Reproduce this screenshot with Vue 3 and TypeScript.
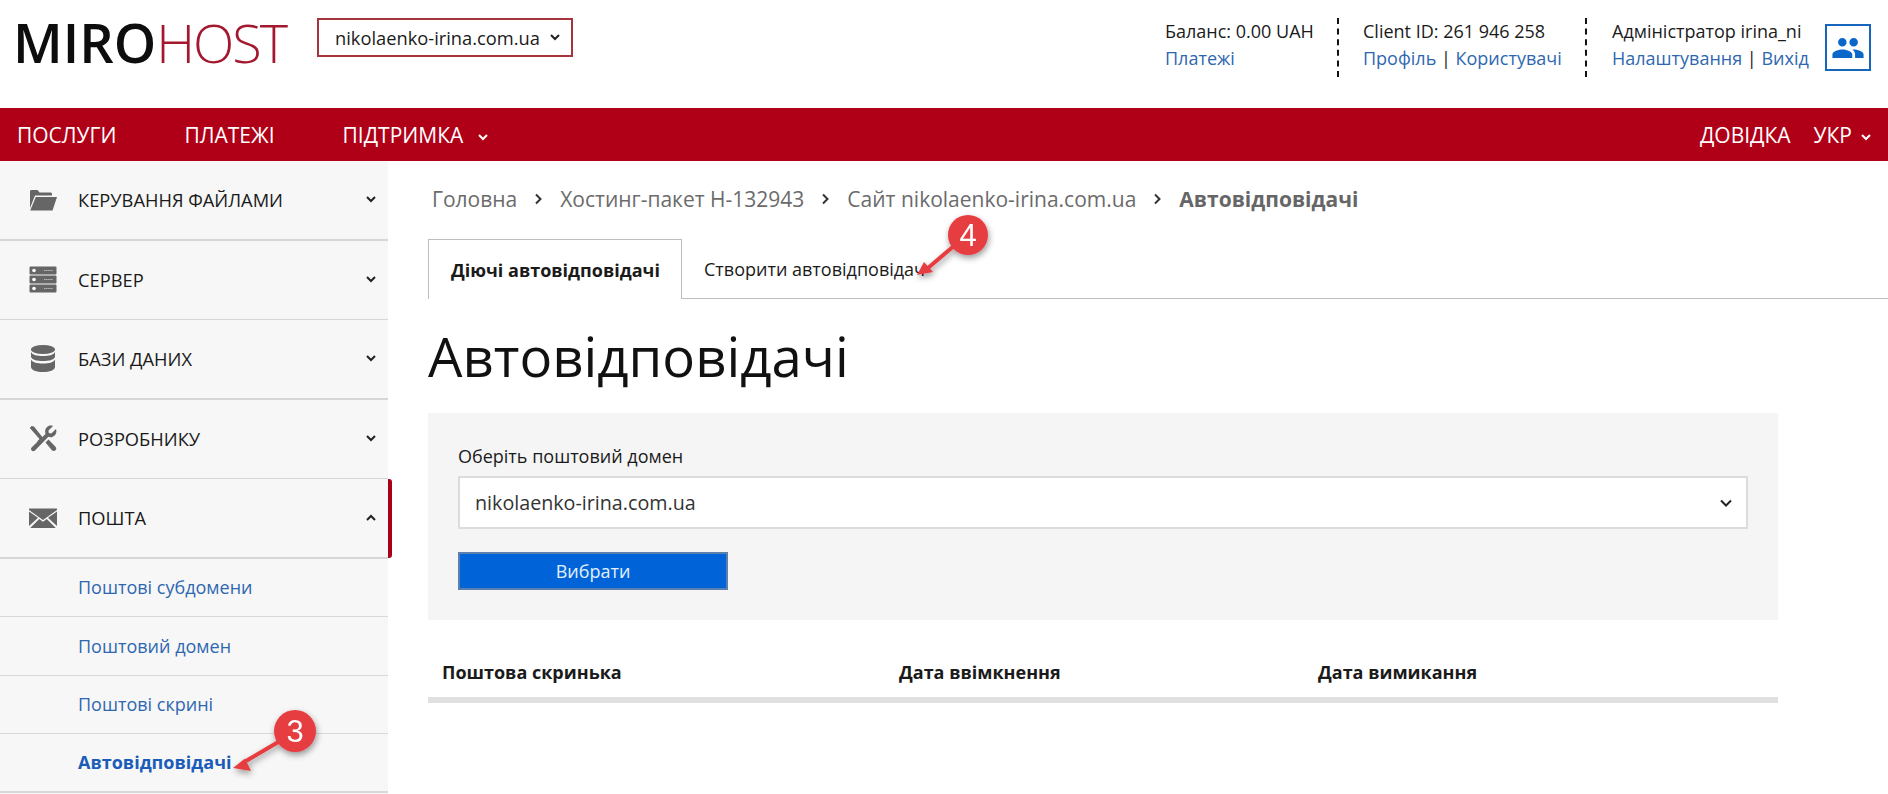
<script setup lang="ts">
interface MenuItem {
  label: string;
  icon: string;
  thick?: boolean;
}

const menu: MenuItem[] = [
  { label: 'Керування файлами', icon: 'folder', thick: true },
  { label: 'Сервер', icon: 'server' },
  { label: 'Бази даних', icon: 'db', thick: true },
  { label: 'Розробнику', icon: 'tools' },
];

const subItems = ['Поштові субдомени', 'Поштовий домен', 'Поштові скрині'];
const crumbs = ['Головна', 'Хостинг-пакет Н-132943', 'Сайт nikolaenko-irina.com.ua'];
</script>

<template>
  <div class="page">
    <header class="top">
      <div class="logo"><span class="logo-a">MIRO</span><span class="logo-b">HOST</span></div>
      <div class="domain">
        <span>nikolaenko-irina.com.ua</span>
        <svg class="chev" width="10" height="7" viewBox="0 0 10 7"><path d="M1 1l4 4 4-4" /></svg>
      </div>
      <div class="account">
        <div class="acc-col acc-balance">
          <div>Баланс: 0.00 UAH</div>
          <div><a>Платежі</a></div>
        </div>
        <div class="acc-col acc-client">
          <div>Client ID: 261 946 258</div>
          <div><a>Профіль</a> | <a>Користувачі</a></div>
        </div>
        <div class="acc-col acc-admin">
          <div>Адміністратор irina_ni</div>
          <div><a>Налаштування</a> | <a>Вихід</a></div>
        </div>
        <div class="user-box">
          <svg width="34" height="34" viewBox="0 0 24 24"><path d="M16 11c1.66 0 2.99-1.34 2.99-3S17.66 5 16 5c-1.66 0-3 1.34-3 3s1.34 3 3 3zm-8 0c1.66 0 2.99-1.34 2.99-3S9.66 5 8 5C6.34 5 5 6.34 5 8s1.34 3 3 3zm0 2c-2.33 0-7 1.17-7 3.5V19h14v-2.5c0-2.33-4.67-3.5-7-3.5zm8 0c-.29 0-.62.02-.97.05 1.16.84 1.97 1.97 1.97 3.45V19h6v-2.5c0-2.33-4.67-3.5-7-3.5z" /></svg>
        </div>
      </div>
    </header>

    <nav class="bar">
      <a class="bar-a">Послуги</a>
      <a class="bar-b">Платежі</a>
      <a class="bar-c">Підтримка<svg class="chev chev-w" width="10" height="7" viewBox="0 0 10 7"><path d="M1 1l4 4 4-4" /></svg></a>
      <a class="bar-d">Довідка</a>
      <a class="bar-e">Укр<svg class="chev chev-w" width="10" height="7" viewBox="0 0 10 7"><path d="M1 1l4 4 4-4" /></svg></a>
    </nav>

    <div class="body">
      <aside class="side">
        <div v-for="item in menu" :key="item.label" class="row" :class="{ thick: item.thick }">
          <span class="row-icon">
            <svg v-if="item.icon === 'folder'" width="28" height="24" viewBox="0 0 28 24">
              <path d="M1 3.500C1 2.500 1.700 2 2.500 2h6l2 2.500h11c.8 0 1.500.5 1.500 1.500v1.500H6L1 20z" />
              <path d="M6.800 9H28l-4.500 13.500H1.200z" />
            </svg>
            <svg v-else-if="item.icon === 'server'" width="28" height="27" viewBox="0 0 28 27">
              <rect x="0.500" y="0.500" width="27" height="8" rx="1" />
              <rect x="0.500" y="9.500" width="27" height="8" rx="1" />
              <rect x="0.500" y="18.500" width="27" height="8" rx="1" />
              <circle cx="5" cy="4.500" r="1.800" fill="#fff" />
              <circle cx="5" cy="13.500" r="1.800" fill="#fff" />
              <circle cx="5" cy="22.500" r="1.800" fill="#fff" />
              <path d="M15 4.500h9M15 13.500h9M15 22.500h9" stroke="#bbb" stroke-width="1" stroke-dasharray="1.500 .6" fill="none" />
            </svg>
            <svg v-else-if="item.icon === 'db'" width="24" height="27" viewBox="0 0 24 27">
              <ellipse cx="12" cy="4.500" rx="12" ry="4.500" />
              <path d="M0 7c1.500 3 6 4 12 4s10.500-1 12-4v5c-1.500 3-6 4-12 4S1.500 15 0 12z" />
              <path d="M0 14.500c1.500 3 6 4 12 4s10.500-1 12-4V22c0 3-5.500 5-12 5S0 25 0 22z" />
            </svg>
            <svg v-else width="28" height="27" viewBox="0 0 28 27">
              <path d="M2.500 1L.8 3l9.700 11-2.200 2.200L10.500 18.500l2.400-2.200 1.800-2.600L5 1.500z" />
              <path d="M24 1l-4.500 4.500.3 2.500 2.500.5L27 4c1.200 3.300-.3 7-3.800 8-1.500.4-2.800.2-3.800-.2L6.200 25.300c-1 1.200-2.500 1.300-3.500.3S1.700 23.100 3 22l13.500-13c-1-3.700 0-6.700 3-8 1.500-.6 3-.6 4.500 0z" />
              <path d="M16.500 17.500l3-3 7 7.200c1 1.100 1 2.600 0 3.600s-2.500 1-3.600 0z" />
            </svg>
          </span>
          <span class="row-label">{{ item.label }}</span>
          <svg class="chev" width="10" height="7" viewBox="0 0 10 7"><path d="M1 1l4 4 4-4" /></svg>
        </div>

        <div class="row row-open">
          <span class="row-icon">
            <svg width="28" height="20" viewBox="0 0 28 20">
              <path d="M0 1.500l14 10 14-10V0H0z" transform="translate(0 .4)" />
              <path d="M0 3.500V18l9-8.200z M28 3.500V18l-9-8.200z" />
              <path d="M1.200 20l9-9 3.800 2.700 3.800-2.700 9 9z" />
            </svg>
          </span>
          <span class="row-label">Пошта</span>
          <svg class="chev" width="10" height="7" viewBox="0 0 10 7"><path d="M1 6l4-4 4 4" /></svg>
        </div>
        <a v-for="s in subItems" :key="s" class="sub">{{ s }}</a>
        <a class="sub sub-active">Автовідповідачі</a>
      </aside>

      <main class="content">
        <div class="crumbs">
          <template v-for="c in crumbs" :key="c">
            <span>{{ c }}</span>
            <svg class="crumb-sep" width="9" height="12" viewBox="0 0 9 12"><path d="M2 1.500L6.500 6 2 10.500" /></svg>
          </template>
          <b>Автовідповідачі</b>
        </div>

        <div class="tabs">
          <div class="tab tab-active">Діючі автовідповідачі</div>
          <div class="tab">Створити автовідповідач</div>
        </div>

        <h1>Автовідповідачі</h1>

        <section class="panel">
          <div class="panel-label">Оберіть поштовий домен</div>
          <div class="select">
            <span>nikolaenko-irina.com.ua</span>
            <svg class="chev" width="12" height="8" viewBox="0 0 12 8"><path d="M1 1.500l5 5 5-5" /></svg>
          </div>
          <div class="btn">Вибрати</div>
        </section>

        <div class="thead">
          <span class="c1">Поштова скринька</span>
          <span class="c2">Дата ввімкнення</span>
          <span class="c3">Дата вимикання</span>
        </div>
      </main>
    </div>

    <!-- numbered callouts drawn over the screenshot -->
    <svg class="callouts" width="1888" height="794" viewBox="0 0 1888 794">
      <defs>
        <filter id="sh" x="-30%" y="-30%" width="160%" height="160%">
          <feDropShadow dx="1" dy="3" stdDeviation="3" flood-color="#000" flood-opacity=".4" />
        </filter>
      </defs>
      <g filter="url(#sh)">
        <path d="M280 741L246 761" stroke="#e53c41" stroke-width="4" fill="none" />
        <path d="M233 768l12-9.500 6 12.500z" fill="#e53c41" />
        <circle cx="295" cy="731" r="21" fill="#e53c41" />
        <text x="295" y="742" class="num">3</text>
      </g>
      <g filter="url(#sh)">
        <path d="M955 245L928 268" stroke="#e53c41" stroke-width="4" fill="none" />
        <path d="M917 275l7-13 9 10z" fill="#e53c41" />
        <circle cx="968" cy="235" r="20" fill="#e53c41" />
        <text x="968" y="246" class="num">4</text>
      </g>
    </svg>
  </div>
</template>

<style>
html,
body {
  margin: 0;
  background: #fff;
}
</style>

<style scoped>
.page {
  position: relative;
  width: 1888px;
  height: 794px;
  overflow: hidden;
  background: #fff;
  color: #1a1a1a;
  font-family: 'Open Sans', 'Noto Sans', sans-serif;
  font-size: 18px;
}

a {
  color: #2e67b0;
  text-decoration: none;
}

.chev path,
.crumb-sep path {
  fill: none;
  stroke: #222;
  stroke-width: 2;
}

/* header */
.top {
  display: flex;
  align-items: flex-start;
  height: 108px;
  padding-left: 13px;
  box-sizing: border-box;
}

.logo {
  flex-shrink: 0;
  width: 276px;
  margin-top: 15px;
  font-size: 54px;
  line-height: 54px;
  white-space: nowrap;
}

.logo-a {
  font-weight: 600;
  color: #0d0d0d;
  letter-spacing: 0;
}

.logo-b {
  font-weight: 300;
  color: #a3182f;
  letter-spacing: -2px;
}

.domain {
  display: flex;
  align-items: center;
  gap: 10px;
  margin-left: 28px;
  margin-top: 18px;
  width: 256px;
  height: 39px;
  box-sizing: border-box;
  padding-left: 16px;
  border: 2px solid #a5353d;
  font-size: 18.300px;
  white-space: nowrap;
}

.account {
  display: flex;
  align-items: flex-start;
  margin-left: auto;
  margin-top: 18px;
  padding-right: 17px;
}

.acc-col {
  height: 59px;
  box-sizing: border-box;
  line-height: 27px;
  white-space: nowrap;
}

.acc-balance {
  width: 172px;
}

.acc-client {
  width: 248px;
  padding-left: 24px;
  border-left: 2px dashed #111;
}

.acc-admin {
  width: 240px;
  padding-left: 25px;
  border-left: 2px dashed #111;
}

.user-box {
  display: flex;
  align-items: center;
  justify-content: center;
  width: 46px;
  height: 47px;
  margin-top: 6px;
  box-sizing: border-box;
  border: 2px solid #1766bd;
}

.user-box path {
  fill: #0a66c8;
}

/* red menu */
.bar {
  display: flex;
  align-items: center;
  height: 53px;
  background: #b00018;
  font-size: 21px;
  text-transform: uppercase;
}

.bar a {
  color: #fff;
  white-space: nowrap;
}

.bar-a {
  margin-left: 17px;
}

.bar-b {
  margin-left: 68px;
}

.bar-c {
  margin-left: 68px;
}

.bar-d {
  margin-left: auto;
}

.bar-e {
  margin-left: 23px;
  margin-right: 17px;
}

.chev-w {
  margin-left: 15px;
  vertical-align: 2px;
}

.bar-e .chev-w {
  margin-left: 9px;
}

.chev-w path {
  stroke: #fff;
}

/* body */
.body {
  display: grid;
  grid-template-columns: 388px 1fr;
}

.side {
  background: #f7f7f7;
  height: 633px;
}

.row {
  display: flex;
  align-items: center;
  height: 79.500px;
  padding-left: 29px;
  padding-right: 12px;
  box-sizing: border-box;
  border-bottom: 1px solid #d6d6d6;
  font-size: 18.300px;
  text-transform: uppercase;
}

.row.thick {
  border-bottom: 2px solid #d6d6d6;
}

.row-icon {
  display: flex;
  justify-content: center;
  align-items: center;
  width: 28px;
  margin-right: 21px;
}

.row-icon svg {
  fill: #666;
}

.row-label {
  flex: 1;
}

.row-open {
  position: relative;
  border-bottom-width: 2px;
}

.row-open::after {
  content: '';
  position: absolute;
  top: 0;
  right: -4px;
  bottom: -1px;
  width: 4px;
  background: #a80018;
  border-radius: 0 3px 3px 0;
}

.sub {
  display: flex;
  align-items: center;
  height: 58.500px;
  box-sizing: border-box;
  padding-left: 78px;
  border-bottom: 1px solid #d9d9d9;
  color: #2e67b0;
}

.sub-active {
  font-weight: 700;
  color: #1a5cb8;
  border-bottom-width: 2px;
}

/* content */
.content {
  padding-left: 40px;
}

.crumbs {
  display: flex;
  align-items: center;
  gap: 17px;
  height: 78px;
  padding-left: 4px;
  padding-bottom: 2px;
  box-sizing: border-box;
  font-size: 21px;
  color: #6b6b6b;
}

.crumbs b {
  font-weight: 700;
  color: #666;
}

.crumb-sep path {
  stroke: #333;
}

.tabs {
  display: flex;
  width: 1460px;
  height: 60px;
  box-sizing: border-box;
  border-bottom: 1px solid #bdbdbd;
}

.tab {
  display: flex;
  align-items: center;
  padding: 0 22px;
  height: 59px;
  box-sizing: border-box;
  white-space: nowrap;
}

.tab-active {
  width: 254px;
  height: 60px;
  font-weight: 700;
  background: #fff;
  border: 1px solid #bdbdbd;
  border-bottom: 0;
}

h1 {
  margin: 0;
  height: 114px;
  display: flex;
  align-items: center;
  font-size: 54.500px;
  font-weight: 400;
  color: #111;
}

.panel {
  width: 1350px;
  height: 207px;
  box-sizing: border-box;
  padding: 30px 30px 0;
  background: #f5f5f5;
}

.panel-label {
  height: 33px;
  line-height: 27px;
}

.select {
  display: flex;
  align-items: center;
  justify-content: space-between;
  height: 53px;
  box-sizing: border-box;
  padding: 0 14px 0 15px;
  background: #fff;
  border: 2px solid #dcdcdc;
  font-size: 19.700px;
  color: #333;
}

.btn {
  width: 270px;
  height: 38px;
  margin-top: 23px;
  box-sizing: border-box;
  display: flex;
  align-items: center;
  justify-content: center;
  background: #0064d8;
  border: 2px solid #5b80ad;
  color: #e3f1ff;
}

.thead {
  display: flex;
  align-items: flex-start;
  width: 1350px;
  margin-top: 40px;
  height: 37px;
  line-height: 25px;
  box-sizing: content-box;
  border-bottom: 6px solid #e0e0e0;
  font-weight: 700;
}

.c1 {
  margin-left: 14px;
  width: 457px;
}

.c2 {
  width: 419px;
}

/* callouts */
.callouts {
  position: absolute;
  left: 0;
  top: 0;
  pointer-events: none;
}

.num {
  fill: #fff;
  font-family: 'Liberation Sans', sans-serif;
  font-size: 31px;
  text-anchor: middle;
}
</style>
